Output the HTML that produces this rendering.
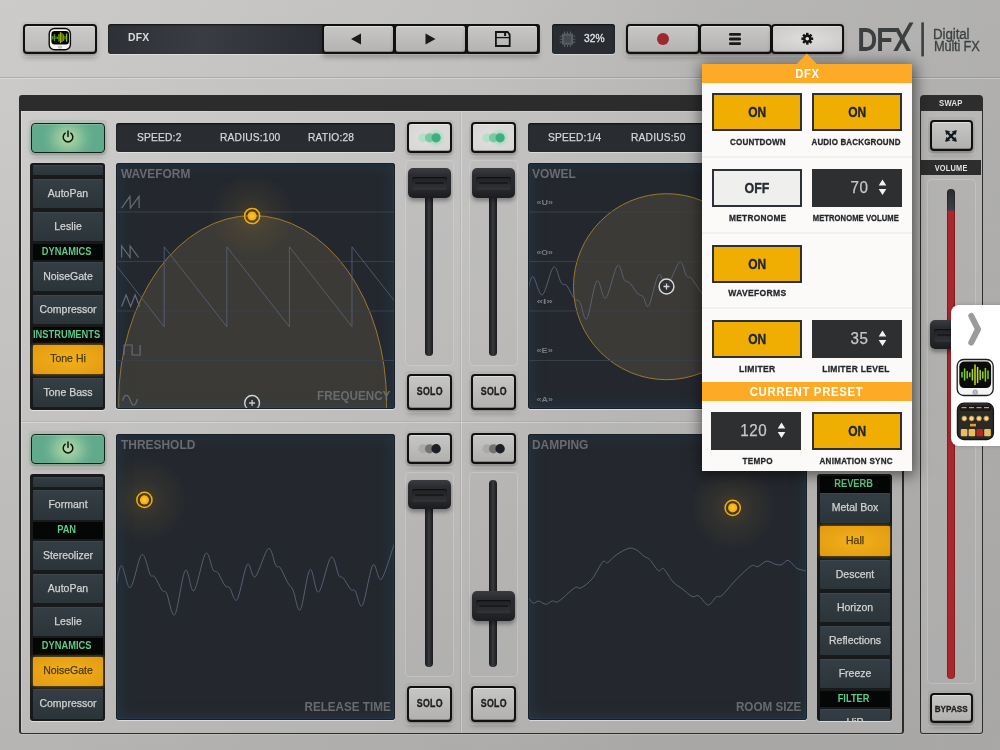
<!DOCTYPE html>
<html><head><meta charset="utf-8"><title>DFX</title>
<style>
*{box-sizing:border-box;margin:0;padding:0}
html,body{width:1000px;height:750px;overflow:hidden}
body{position:relative;background:radial-gradient(circle at 100% 100%,rgba(255,255,255,.1),rgba(255,255,255,0) 45%),linear-gradient(90deg,rgba(0,0,0,0),rgba(0,0,0,.055) 50%,rgba(0,0,0,.1) 70%,rgba(0,0,0,.13)),linear-gradient(180deg,#cccbca,#cac9c8 15%,#c4c3c1 42%,#b6b5b3);font-family:"Liberation Sans",sans-serif;}
.abs{position:absolute}
#topbg{display:none}
#topline{left:0;top:77.2px;width:1000px;height:2px;background:linear-gradient(rgba(0,0,0,.13),rgba(0,0,0,.13) 50%,rgba(255,255,255,.28) 50%)}
.recess{position:absolute;border-radius:5px;background:rgba(0,0,0,.03);box-shadow:inset 0 0 0 1px rgba(255,255,255,.16),inset 0 1px 1px rgba(0,0,0,.10),0 1px 0 rgba(255,255,255,.25)}
.btn{position:absolute;border:2px solid #101010;border-radius:4px;background:linear-gradient(#c6c6c4,#b1b0ae);box-shadow:0 4px 5px rgba(0,0,0,.22),inset 0 1px 0 rgba(255,255,255,.4),inset 0 -1px 0 rgba(0,0,0,.25)}
.btn.top{background:linear-gradient(#c7c7c5,#b4b3b1)}
.btn.top1{background:linear-gradient(#cccbc9,#bbbab8)}
.btn.lit{background:radial-gradient(ellipse at center,#dfdedd,#c9c8c7)}
.btn.tog{background:radial-gradient(ellipse at center,#e2e1df,#d6d5d3)}
.btn.pow{border-color:#15201b;border-width:1.7px;background:radial-gradient(ellipse 36% 85% at 50% 50%,#b8d9a6,#8fc59c 40%,#6cb292 75%,#62aa8c);box-shadow:0 0 5px rgba(110,190,140,.5),0 4px 5px rgba(0,0,0,.2),inset 0 1px 0 rgba(255,255,255,.18)}
.disp{position:absolute;border-radius:3px;background:#292d32;box-shadow:inset 0 1px 2px rgba(0,0,0,.7),0 1px 0 rgba(255,255,255,.4)}
.t{position:absolute;white-space:nowrap;transform-origin:0 50%;line-height:1}
.tc{position:absolute;white-space:nowrap;text-align:center;line-height:1}
.tc span{display:inline-block}
.list{position:absolute;overflow:hidden;background:#17191b;border-radius:3px;box-shadow:0 1px 0 rgba(255,255,255,.5)}
.it{position:absolute;left:3px;right:2px;background:linear-gradient(#343e44,#2b3439);color:#d2d3d3;font-size:10.5px;text-align:center;border-radius:1px;box-shadow:inset 0 1px 0 rgba(255,255,255,.05)}
.it.on{background:radial-gradient(ellipse at center,#f2b01c,#e29a10);color:#4a3a10;box-shadow:0 0 4px rgba(240,170,20,.6)}
.hd{position:absolute;left:3px;right:2px;background:#050606;color:#5fc98a;font-size:10.5px;font-weight:bold;text-align:center}
.it span.c,.hd span.c{position:absolute;left:50%;top:0;white-space:nowrap}
.pad{position:absolute;overflow:hidden;border-radius:3px;background:#24282e;box-shadow:0 1px 0 rgba(255,255,255,.5)}
.pad .glow{position:absolute;left:0;top:0;right:0;bottom:0;border-radius:3px;box-shadow:inset 0 0 0 1px #1a1f25,inset 0 0 2.5px 1px rgba(40,100,150,.4),inset 0 0 16px 1px rgba(48,92,130,.3),inset 0 2px 3px rgba(0,0,0,.35)}
.pl{position:absolute;color:#696b6e;font-size:12px;font-weight:bold;line-height:1;white-space:nowrap}
.frec{position:absolute;border-radius:5px;background:rgba(0,0,0,.015);box-shadow:inset 0 0 0 1px rgba(255,255,255,.2)}
.ftr{position:absolute;width:7.6px;border-radius:3.8px;background:linear-gradient(90deg,#1b1c1f,#2a2b2f 30%,#3a3c41 50%,#2a2b2f 70%,#1b1c1f);}
.fh{position:absolute;width:43px;height:29.5px;border-radius:5px;background:linear-gradient(#3a3c41,#2a2c30 25%,#26282b 70%,#1b1c1f);box-shadow:0 3px 4px rgba(0,0,0,.35)}
.fh i{position:absolute;left:4px;right:4px;top:9px;height:12px;border-radius:2px;background:linear-gradient(#1f2023,#303236);box-shadow:inset 0 1px 1px rgba(0,0,0,.6),0 1px 0 rgba(255,255,255,.06)}
.fh b{position:absolute;left:7px;right:7px;top:14px;height:2px;background:#191a1c;border-radius:1px}
.pop{position:absolute;background:#fbfaf8}
.pbtn{position:absolute;width:90px;height:38px;border:2px solid #2c3037;background:#f0ad02;color:#202733;font-weight:bold;font-size:15px;text-align:center;line-height:34.5px}
.pbtn.off{background:#efefee;color:#262a30}
.pnum{position:absolute;width:90px;height:38px;background:#2e2f31;color:#c8c8c6;font-size:16.5px;line-height:37px}
.plab{position:absolute;width:110px;text-align:center;font-size:9.5px;font-weight:bold;color:#24272c;line-height:1;white-space:nowrap;-webkit-text-stroke:.3px #24272c}
.plab span,.pbtn span,.pnum span{display:inline-block}
.psep{position:absolute;left:0;width:210px;height:2px;background:#f1f0ee}
</style></head><body><div id="root" style="position:absolute;left:0;top:0;width:1000px;height:750px;overflow:hidden;will-change:transform">
<div id="topbg" class="abs"></div><div id="topline" class="abs"></div>
<div class="recess" style="left:21px;top:22px;width:78px;height:34px"></div>
<div class="btn top1" style="left:23px;top:24px;width:74px;height:30px"></div>
<svg class="abs" style="left:47px;top:26px" width="26" height="26" viewBox="47 26 26 26"><rect x="49.2" y="28.5" width="21.2" height="21.2" rx="5.3" fill="#f6f6f6" stroke="#0c0c0c" stroke-width="1.4"/><rect x="51.4" y="30.9" width="17.6" height="13.5" rx="3.2" fill="#050505"/><rect x="58.3" y="46" width="3.4" height="2.2" rx=".8" fill="#cfcfcf" stroke="#aaa" stroke-width=".5"/><g stroke-linecap="round"><path d="M52.8 36.3v2.6" stroke="#6aa912" stroke-width="1.2"/><path d="M54.5 34.6v6" stroke="#4f9a10" stroke-width="1.3"/><path d="M56 36.8v1.6" stroke="#4f9a10" stroke-width="1.2"/><path d="M57.6 37v1.4" stroke="#5a9f10" stroke-width="1.2"/><path d="M59 34.5v6.4" stroke="#5c9c12" stroke-width="1.5"/><path d="M60.5 32.6v10" stroke="#a3a80e" stroke-width="1.3"/><path d="M62 33.6v8" stroke="#7d9f10" stroke-width="1.4"/><path d="M63.5 35v5.400" stroke="#6a9f10" stroke-width="1.3"/><path d="M65 36.5v2.500" stroke="#5fa010" stroke-width="1.2"/><path d="M66.600 34.200v7" stroke="#86b512" stroke-width="1.3"/></g></svg>
<div class="disp" style="left:108px;top:24px;width:432px;height:30px;background:linear-gradient(100deg,#2d3136 0%,#393c42 22%,#2b2e33 48%,#25282d 100%)"></div>
<div class="t" style="left:128px;top:32px;font-size:11.5px;font-weight:bold;color:#dcdcdc;transform:scaleX(.9);letter-spacing:.2px">DFX</div>
<div class="btn top" style="left:322px;top:24px;width:73px;height:30px"></div>
<div class="btn top" style="left:394px;top:24px;width:73px;height:30px"></div>
<div class="btn top" style="left:466px;top:24px;width:73px;height:30px"></div>
<div class="disp" style="left:552px;top:24px;width:63px;height:30px"></div>
<div class="t" style="left:584.3px;top:33.4px;font-size:11px;color:#e2e2e2;transform:scaleX(.93);-webkit-text-stroke:.3px #e2e2e2">32%</div>
<div class="recess" style="left:624px;top:22px;width:222px;height:34px"></div>
<div class="btn top" style="left:626px;top:24px;width:74px;height:30px"></div>
<div class="btn top" style="left:699px;top:24px;width:73px;height:30px"></div>
<div class="btn lit" style="left:771px;top:24px;width:73px;height:30px"></div>
<div class="abs" style="left:657px;top:33px;width:12px;height:12px;border-radius:50%;background:#9b2a2d"></div>
<svg class="abs" style="left:0;top:0" width="1000" height="80" viewBox="0 0 1000 80">
<path d="M351 38.9 L361 33.4 V44.4 Z" fill="#1a1a1a"/>
<path d="M435.5 38.9 L425.5 33.4 V44.4 Z" fill="#1a1a1a"/>
<g fill="#1a1a1a"><rect x="729" y="33" width="12" height="2.8" rx="1.2"/><rect x="729" y="37.6" width="12" height="2.8" rx="1.2"/><rect x="729" y="42.2" width="12" height="2.8" rx="1.2"/></g>
<g id="save" fill="none" stroke="#141414" stroke-width="1.8" stroke-linejoin="miter"><path d="M495.9 32 h11.7 l2.1 2.6 v11.4 h-13.8 z"/><path d="M495.9 37.6 h13.8" stroke-width="1.3"/></g>
<rect x="504.1" y="33" width="2" height="3" fill="#141414"/>
<g id="cpu" fill="#454a52" stroke="#585d65" stroke-width="2"><rect x="563" y="34.7" width="9" height="9"/></g>
<g stroke="#585d65" stroke-width="1.1"><path d="M564.6 31.4v2.5M567.5 31.4v2.5M570.4 31.4v2.5M564.6 44.5v2.5M567.5 44.5v2.5M570.4 44.5v2.5M559.7 36.3h2.5M559.7 39.2h2.5M559.7 42.1h2.5M572.8 36.3h2.5M572.8 39.2h2.5M572.8 42.1h2.5"/></g>
<g id="gear" transform="translate(807.3,38.7)" fill="#141414"><circle r="4.100"/><g><rect x="-1.250" y="-5.900" width="2.500" height="11.800"/><rect x="-1.250" y="-5.900" width="2.500" height="11.800" transform="rotate(45)"/><rect x="-1.250" y="-5.900" width="2.500" height="11.800" transform="rotate(90)"/><rect x="-1.250" y="-5.900" width="2.500" height="11.800" transform="rotate(135)"/></g><circle r="1.800" fill="#e4e3e2"/></g>
<g id="logo" fill="none" stroke="#3b3f40" stroke-width="3.9"><path d="M861.150 30.050 H866.200 A7.800 7.800 0 0 1 874.050 37.850 V41.250 A7.800 7.800 0 0 1 866.200 49.050 H861.150 Z"/><path d="M880.050 51 V30.050 H896 M880.050 40.050 H891.300"/></g><g fill="#3b3f40"><path d="M893.400 51 L897.500 51 L913.500 22.500 L909.400 22.500Z"/><path d="M894.300 28.100 L898.600 28.100 L910.900 51 L906.600 51Z"/></g>
<rect x="921.3" y="22.4" width="2.600" height="34" fill="#3b3f40"/>
</svg>
<div class="t" style="left:933.3px;top:26.7px;font-size:14px;color:#3c4040;transform:scaleX(.955);letter-spacing:-.1px;-webkit-text-stroke:.3px #3c4040">Digital</div>
<div class="t" style="left:934px;top:39px;font-size:14px;color:#3c4040;transform:scaleX(.915);letter-spacing:-.2px;-webkit-text-stroke:.3px #3c4040">Multi FX</div>
<div class="abs" style="left:19px;top:94.5px;width:885px;height:639px;border:2px solid #2c2c2c;border-top-width:16px;border-bottom-width:1.6px;border-radius:3px 3px 3px 3px;background:rgba(255,255,255,.075);box-shadow:0 1px 0 rgba(255,255,255,.18),inset 1px 1px 0 rgba(255,255,255,.2)"></div>
<div class="abs" style="left:461px;top:111.5px;width:1px;height:621px;background:rgba(255,255,255,.3)"></div>
<div class="abs" style="left:460px;top:111.5px;width:1px;height:621px;background:rgba(0,0,0,.06)"></div>
<div class="abs" style="left:21px;top:422px;width:881px;height:1px;background:rgba(255,255,255,.3)"></div>
<div class="abs" style="left:21px;top:421px;width:881px;height:1px;background:rgba(0,0,0,.06)"></div>
<div class="recess" style="left:28px;top:120px;width:80px;height:36px"></div>
<div class="btn pow" style="left:31px;top:123px;width:74px;height:30px"></div>
<svg class="abs" style="left:59.5px;top:129px" width="16" height="16" viewBox="-8 -8 16 16"><path d="M-2.800 -3.800 A4.800 4.800 0 1 0 2.800 -3.800" fill="none" stroke="#0d1814" stroke-width="1.5" stroke-linecap="round"/><path d="M0 -6 V-0.500" stroke="#0d1814" stroke-width="1.5" stroke-linecap="round"/></svg>
<div class="disp" style="left:116.3px;top:123px;width:279.2px;height:29px"></div>
<div class="t" style="left:136.5px;top:132px;font-size:11px;color:#d6d6d6;transform:scaleX(.93);letter-spacing:.2px;-webkit-text-stroke:.25px #d6d6d6">SPEED:2</div>
<div class="t" style="left:220px;top:132px;font-size:11px;color:#d6d6d6;transform:scaleX(.93);letter-spacing:.2px;-webkit-text-stroke:.25px #d6d6d6">RADIUS:100</div>
<div class="t" style="left:308px;top:132px;font-size:11px;color:#d6d6d6;transform:scaleX(.93);letter-spacing:.2px;-webkit-text-stroke:.25px #d6d6d6">RATIO:28</div>
<div class="recess" style="left:404px;top:119.5px;width:51px;height:36px"></div>
<div class="btn tog" style="left:406.8px;top:122.3px;width:45.2px;height:30.7px"></div>
<svg class="abs" style="left:407px;top:122.5px" width="45" height="30" viewBox="407 122.5 45 30"><defs><filter id="gb407122.5" x="-50%" y="-50%" width="200%" height="200%"><feGaussianBlur stdDeviation="2"/></filter></defs><circle cx="435.9" cy="137.3" r="6.5" fill="#5fd6a0" opacity=".55" filter="url(#gb407122.5)"/><circle cx="423.09999999999997" cy="137.3" r="4.6" fill="#b4dec9"/><circle cx="429.5" cy="137.3" r="4.6" fill="#7cc8a3"/><circle cx="436.09999999999997" cy="137.3" r="4.6" fill="#3fae7f"/></svg>
<div class="recess" style="left:468px;top:119.5px;width:51px;height:36px"></div>
<div class="btn tog" style="left:470.8px;top:122.3px;width:45.2px;height:30.7px"></div>
<svg class="abs" style="left:471px;top:122.5px" width="45" height="30" viewBox="471 122.5 45 30"><defs><filter id="gb471122.5" x="-50%" y="-50%" width="200%" height="200%"><feGaussianBlur stdDeviation="2"/></filter></defs><circle cx="499.9" cy="137.3" r="6.5" fill="#5fd6a0" opacity=".55" filter="url(#gb471122.5)"/><circle cx="487.09999999999997" cy="137.3" r="4.6" fill="#b4dec9"/><circle cx="493.5" cy="137.3" r="4.6" fill="#7cc8a3"/><circle cx="500.09999999999997" cy="137.3" r="4.6" fill="#3fae7f"/></svg>
<div class="list" style="left:30px;top:163px;width:75px;height:247px">
<div class="it" style="top:2px;height:9.5px;line-height:8.3px"><span class="c" style="-webkit-text-stroke:.25px currentColor;transform:translateX(-50%) scaleX(1.0)"></span></div>
<div class="it" style="top:15.5px;height:29.5px;line-height:28.3px"><span class="c" style="-webkit-text-stroke:.25px currentColor;transform:translateX(-50%) scaleX(1.0)">AutoPan</span></div>
<div class="it" style="top:48.5px;height:29.5px;line-height:28.3px"><span class="c" style="-webkit-text-stroke:.25px currentColor;transform:translateX(-50%) scaleX(1.0)">Leslie</span></div>
<div class="hd" style="top:81px;height:16px;line-height:14.8px"><span class="c" style="transform:translateX(calc(-50% - 1.4px)) scaleX(0.885)">DYNAMICS</span></div>
<div class="it" style="top:98.5px;height:29.5px;line-height:28.3px"><span class="c" style="-webkit-text-stroke:.25px currentColor;transform:translateX(-50%) scaleX(1.0)">NoiseGate</span></div>
<div class="it" style="top:131.5px;height:29.5px;line-height:28.3px"><span class="c" style="-webkit-text-stroke:.25px currentColor;transform:translateX(-50%) scaleX(1.0)">Compressor</span></div>
<div class="hd" style="top:163.5px;height:16px;line-height:14.8px"><span class="c" style="transform:translateX(calc(-50% - 1.4px)) scaleX(0.885)">INSTRUMENTS</span></div>
<div class="it on" style="top:182px;height:29px;line-height:27.8px"><span class="c" style="-webkit-text-stroke:.25px currentColor;transform:translateX(-50%) scaleX(1.0)">Tone Hi</span></div>
<div class="it" style="top:214.5px;height:29.5px;line-height:28.3px"><span class="c" style="-webkit-text-stroke:.25px currentColor;transform:translateX(-50%) scaleX(1.0)">Tone Bass</span></div>
</div>
<div class="frec" style="left:404.5px;top:160px;width:49px;height:206px"></div>
<div class="ftr" style="left:425.3px;top:167.5px;height:188.5px"></div>
<div class="fh" style="left:408.0px;top:168.3px"><i></i><b></b></div>
<div class="frec" style="left:468.5px;top:160px;width:49px;height:206px"></div>
<div class="ftr" style="left:489.3px;top:167.5px;height:188.5px"></div>
<div class="fh" style="left:472.0px;top:168.3px"><i></i><b></b></div>
<div class="recess" style="left:404px;top:371px;width:51px;height:41px"></div>
<div class="btn" style="left:406.5px;top:373.5px;width:45.5px;height:36px"></div>
<div class="tc" style="left:407px;top:386.7px;width:45px;font-size:10px;font-weight:bold;color:#1c1c1c"><span style="transform:scaleX(.88);letter-spacing:.3px;-webkit-text-stroke:.3px #1c1c1c">SOLO</span></div>
<div class="recess" style="left:468px;top:371px;width:51px;height:41px"></div>
<div class="btn" style="left:470.5px;top:373.5px;width:45.5px;height:36px"></div>
<div class="tc" style="left:471px;top:386.7px;width:45px;font-size:10px;font-weight:bold;color:#1c1c1c"><span style="transform:scaleX(.88);letter-spacing:.3px;-webkit-text-stroke:.3px #1c1c1c">SOLO</span></div>
<div class="recess" style="left:28px;top:431px;width:80px;height:36px"></div>
<div class="btn pow" style="left:31px;top:434px;width:74px;height:30px"></div>
<svg class="abs" style="left:59.5px;top:440px" width="16" height="16" viewBox="-8 -8 16 16"><path d="M-2.800 -3.800 A4.800 4.800 0 1 0 2.800 -3.800" fill="none" stroke="#0d1814" stroke-width="1.5" stroke-linecap="round"/><path d="M0 -6 V-0.500" stroke="#0d1814" stroke-width="1.5" stroke-linecap="round"/></svg>
<div class="recess" style="left:404px;top:430.5px;width:51px;height:36px"></div>
<div class="btn" style="left:406.8px;top:433.3px;width:45.2px;height:30.7px"></div>
<svg class="abs" style="left:407px;top:433.5px" width="45" height="30" viewBox="407 433.5 45 30"><circle cx="423.09999999999997" cy="448.3" r="4.6" fill="#a9a9a7"/><circle cx="429.5" cy="448.3" r="4.6" fill="#737373"/><circle cx="436.09999999999997" cy="448.3" r="4.7" fill="#1c1f25"/></svg>
<div class="recess" style="left:468px;top:430.5px;width:51px;height:36px"></div>
<div class="btn" style="left:470.8px;top:433.3px;width:45.2px;height:30.7px"></div>
<svg class="abs" style="left:471px;top:433.5px" width="45" height="30" viewBox="471 433.5 45 30"><circle cx="487.09999999999997" cy="448.3" r="4.6" fill="#a9a9a7"/><circle cx="493.5" cy="448.3" r="4.6" fill="#737373"/><circle cx="500.09999999999997" cy="448.3" r="4.7" fill="#1c1f25"/></svg>
<div class="list" style="left:30px;top:474px;width:75px;height:247px">
<div class="it" style="top:3px;height:9.5px;line-height:8.3px"><span class="c" style="-webkit-text-stroke:.25px currentColor;transform:translateX(-50%) scaleX(1.0)"></span></div>
<div class="it" style="top:16px;height:29.5px;line-height:28.3px"><span class="c" style="-webkit-text-stroke:.25px currentColor;transform:translateX(-50%) scaleX(1.0)">Formant</span></div>
<div class="hd" style="top:48px;height:16.5px;line-height:15.3px"><span class="c" style="transform:translateX(calc(-50% - 1.4px)) scaleX(0.885)">PAN</span></div>
<div class="it" style="top:66.5px;height:29.5px;line-height:28.3px"><span class="c" style="-webkit-text-stroke:.25px currentColor;transform:translateX(-50%) scaleX(1.0)">Stereolizer</span></div>
<div class="it" style="top:99.5px;height:29.5px;line-height:28.3px"><span class="c" style="-webkit-text-stroke:.25px currentColor;transform:translateX(-50%) scaleX(1.0)">AutoPan</span></div>
<div class="it" style="top:132.5px;height:29.5px;line-height:28.3px"><span class="c" style="-webkit-text-stroke:.25px currentColor;transform:translateX(-50%) scaleX(1.0)">Leslie</span></div>
<div class="hd" style="top:164px;height:16.5px;line-height:15.3px"><span class="c" style="transform:translateX(calc(-50% - 1.4px)) scaleX(0.885)">DYNAMICS</span></div>
<div class="it on" style="top:182.5px;height:29px;line-height:27.8px"><span class="c" style="-webkit-text-stroke:.25px currentColor;transform:translateX(-50%) scaleX(1.0)">NoiseGate</span></div>
<div class="it" style="top:215px;height:29.5px;line-height:28.3px"><span class="c" style="-webkit-text-stroke:.25px currentColor;transform:translateX(-50%) scaleX(1.0)">Compressor</span></div>
</div>
<div class="frec" style="left:404.5px;top:472px;width:49px;height:205px"></div>
<div class="ftr" style="left:425.3px;top:479.5px;height:187.5px"></div>
<div class="fh" style="left:408.0px;top:479.8px"><i></i><b></b></div>
<div class="frec" style="left:468.5px;top:472px;width:49px;height:205px"></div>
<div class="ftr" style="left:489.3px;top:479.5px;height:187.5px"></div>
<div class="fh" style="left:472.0px;top:591px"><i></i><b></b></div>
<div class="recess" style="left:404px;top:683px;width:51px;height:41px"></div>
<div class="btn" style="left:406.5px;top:685.5px;width:45.5px;height:36px"></div>
<div class="tc" style="left:407px;top:698.7px;width:45px;font-size:10px;font-weight:bold;color:#1c1c1c"><span style="transform:scaleX(.88);letter-spacing:.3px;-webkit-text-stroke:.3px #1c1c1c">SOLO</span></div>
<div class="recess" style="left:468px;top:683px;width:51px;height:41px"></div>
<div class="btn" style="left:470.5px;top:685.5px;width:45.5px;height:36px"></div>
<div class="tc" style="left:471px;top:698.7px;width:45px;font-size:10px;font-weight:bold;color:#1c1c1c"><span style="transform:scaleX(.88);letter-spacing:.3px;-webkit-text-stroke:.3px #1c1c1c">SOLO</span></div>
<div class="list" style="left:817px;top:474px;width:75px;height:247px">
<div class="hd" style="top:2px;height:16.5px;line-height:15.3px"><span class="c" style="transform:translateX(calc(-50% - 1.4px)) scaleX(0.885)">REVERB</span></div>
<div class="it" style="top:19px;height:29.5px;line-height:28.3px"><span class="c" style="-webkit-text-stroke:.25px currentColor;transform:translateX(-50%) scaleX(1.0)">Metal Box</span></div>
<div class="it on" style="top:52px;height:30px;line-height:28.8px"><span class="c" style="-webkit-text-stroke:.25px currentColor;transform:translateX(-50%) scaleX(1.0)">Hall</span></div>
<div class="it" style="top:85.5px;height:29.5px;line-height:28.3px"><span class="c" style="-webkit-text-stroke:.25px currentColor;transform:translateX(-50%) scaleX(1.0)">Descent</span></div>
<div class="it" style="top:118.5px;height:29.5px;line-height:28.3px"><span class="c" style="-webkit-text-stroke:.25px currentColor;transform:translateX(-50%) scaleX(1.0)">Horizon</span></div>
<div class="it" style="top:151.5px;height:29.5px;line-height:28.3px"><span class="c" style="-webkit-text-stroke:.25px currentColor;transform:translateX(-50%) scaleX(1.0)">Reflections</span></div>
<div class="it" style="top:184.5px;height:29.5px;line-height:28.3px"><span class="c" style="-webkit-text-stroke:.25px currentColor;transform:translateX(-50%) scaleX(1.0)">Freeze</span></div>
<div class="hd" style="top:216.5px;height:16.5px;line-height:15.3px"><span class="c" style="transform:translateX(calc(-50% - 1.4px)) scaleX(0.885)">FILTER</span></div>
<div class="it" style="top:235px;height:28px;line-height:26.8px"><span class="c" style="-webkit-text-stroke:.25px currentColor;transform:translateX(-50%) scaleX(1.0)">HiP</span></div>
</div>
<div class="disp" style="left:527.6px;top:123px;width:279.2px;height:29px"></div>
<div class="t" style="left:548px;top:132px;font-size:11px;color:#d6d6d6;transform:scaleX(.93);letter-spacing:.2px;-webkit-text-stroke:.25px #d6d6d6">SPEED:1/4</div>
<div class="t" style="left:631px;top:132px;font-size:11px;color:#d6d6d6;transform:scaleX(.93);letter-spacing:.2px;-webkit-text-stroke:.25px #d6d6d6">RADIUS:50</div>
<div class="pad" style="left:116.4px;top:162.5px;width:278.8px;height:246.7px">
<svg class="abs" style="left:0;top:0" width="278.8" height="246.7" viewBox="116.4 162.5 278.8 246.7"><defs><radialGradient id="hg"><stop offset="0" stop-color="#e0a020" stop-opacity=".17"/><stop offset=".5" stop-color="#d0a030" stop-opacity=".065"/><stop offset="1" stop-color="#f0a010" stop-opacity="0"/></radialGradient><radialGradient id="hd"><stop offset="0" stop-color="#ffc83a"/><stop offset="1" stop-color="#f5a800"/></radialGradient></defs><ellipse cx="253" cy="402" rx="134" ry="187" fill="rgba(78,72,62,.55)" stroke="#a8812f" stroke-width=".9"/><path d="M116 211.5H396" stroke="#3a4048" stroke-width="1"/><path d="M116 261H396" stroke="#3a4048" stroke-width="1"/><path d="M116 310.5H396" stroke="#3a4048" stroke-width="1"/><path d="M116 360H396" stroke="#3a4048" stroke-width="1"/><path d="M116 264.2 L164.6 326.2 L164.6 246.3 L227.2 326.2 L227.2 246.3 L289.8 326.2 L289.8 246.3 L352.40000000000003 326.2 L352.4 246.3 L396 301.9" fill="none" stroke="#5b6a82" stroke-width="1" opacity=".75"/><g fill="none" stroke="#666d78" stroke-width="1.2"><path d="M122 207.600 L130.300 195.800 L130.800 207.600 L139.400 195.800 L139.600 207.600"/><path d="M122 257 V245.5 L130.5 257 V245.5 L139 257"/><path d="M122 306 L126.5 294.5 L131 306 L135.5 294.5 L140 306"/><path d="M124.500 354.500 V344.500 H132.500 V354.500 H140.500 V344.500"/><path d="M123 400.500 C124.500 394 128 392.500 130.500 399.500 S135.500 406.500 137.800 398.500"/></g><circle cx="252.5" cy="215.5" r="42" fill="url(#hg)"/><circle cx="252.5" cy="215.5" r="7.6" fill="none" stroke="#f6ab04" stroke-width="1.5"/><circle cx="252.5" cy="215.5" r="4.6" fill="url(#hd)"/><circle cx="252.5" cy="402.5" r="7.4" fill="rgba(40,42,46,.6)" stroke="#d8d8d8" stroke-width="1.5"/><path d="M249.5 402.5h6M252.5 399.5v6" stroke="#d8d8d8" stroke-width="1.3"/></svg>
<div class="glow"></div>
<div class="pl" style="left:4.4px;top:5.5px;transform-origin:0 50%;transform:scaleX(.995)">WAVEFORM</div>
<div class="pl" style="right:5px;bottom:7px;transform-origin:100% 50%;transform:scaleX(.972)">FREQUENCY</div>
</div>
<div class="pad" style="left:527.8px;top:162.5px;width:278.8px;height:246.7px">
<svg class="abs" style="left:0;top:0" width="278.8" height="246.7" viewBox="527.8 162.5 278.8 246.7"><defs><radialGradient id="hg"><stop offset="0" stop-color="#e0a020" stop-opacity=".17"/><stop offset=".5" stop-color="#d0a030" stop-opacity=".065"/><stop offset="1" stop-color="#f0a010" stop-opacity="0"/></radialGradient><radialGradient id="hd"><stop offset="0" stop-color="#ffc83a"/><stop offset="1" stop-color="#f5a800"/></radialGradient></defs><circle cx="666.3" cy="286.2" r="93" fill="rgba(78,72,62,.55)" stroke="#a8812f" stroke-width=".9"/><path d="M528 211.5H808" stroke="#3a4048" stroke-width="1"/><path d="M528 261H808" stroke="#3a4048" stroke-width="1"/><path d="M528 310.5H808" stroke="#3a4048" stroke-width="1"/><path d="M528 360H808" stroke="#3a4048" stroke-width="1"/><path d="M526.8 294.0 C527.8 291.0 530.0 275.9 532.6 276.0 C535.2 276.1 538.6 296.0 542.1 294.4 C545.6 292.8 550.2 268.6 553.4 266.6 C556.5 264.6 558.8 279.2 561.0 282.3 C563.2 285.4 564.7 282.8 566.8 285.4 C568.9 287.9 571.4 294.8 573.6 297.6 C575.8 300.4 577.7 298.7 579.9 302.1 C582.1 305.6 583.8 321.9 586.6 318.3 C589.4 314.7 593.5 283.9 596.6 280.5 C599.8 277.1 602.1 300.2 605.5 297.6 C608.9 295.1 614.1 268.3 617.2 265.2 C620.3 262.1 622.0 276.3 624.0 279.2 C626.0 282.1 627.1 280.0 629.4 282.3 C631.6 284.6 635.2 290.8 637.5 293.1 C639.8 295.4 641.0 294.2 642.9 296.2 C644.8 298.2 646.0 308.9 648.6 305.2 C651.2 301.5 655.5 277.4 658.5 274.2 C661.5 271.0 663.0 288.1 666.5 286.0 C670.0 283.9 676.1 263.4 679.4 261.6 C682.7 259.8 684.1 272.3 686.1 275.1 C688.1 277.9 688.8 275.1 691.5 278.2 C694.2 281.3 699.9 290.9 702.3 294.0 C704.7 297.1 705.4 296.5 706.0 297.0" fill="none" stroke="#5b6a82" stroke-width="1" opacity=".85"/><circle cx="666.3" cy="286" r="7.4" fill="rgba(40,42,46,.6)" stroke="#d8d8d8" stroke-width="1.5"/><path d="M663.3 286h6M666.3 283v6" stroke="#d8d8d8" stroke-width="1.3"/><text x="536.2" y="204.7" font-size="7.5" font-weight="bold" fill="#787b81" font-family="Liberation Sans" textLength="16.5" lengthAdjust="spacingAndGlyphs">«U»</text><text x="536.2" y="254.2" font-size="7.5" font-weight="bold" fill="#787b81" font-family="Liberation Sans" textLength="16.5" lengthAdjust="spacingAndGlyphs">«O»</text><text x="536.2" y="303.2" font-size="7.5" font-weight="bold" fill="#787b81" font-family="Liberation Sans" textLength="16.5" lengthAdjust="spacingAndGlyphs">«I»</text><text x="536.2" y="352.7" font-size="7.5" font-weight="bold" fill="#787b81" font-family="Liberation Sans" textLength="16.5" lengthAdjust="spacingAndGlyphs">«E»</text><text x="536.2" y="401.7" font-size="7.5" font-weight="bold" fill="#787b81" font-family="Liberation Sans" textLength="16.5" lengthAdjust="spacingAndGlyphs">«A»</text></svg>
<div class="glow"></div>
<div class="pl" style="left:4.4px;top:5.5px;transform-origin:0 50%;transform:scaleX(.995)">VOWEL</div>
<div class="pl" style="right:5px;bottom:7px;transform-origin:100% 50%;transform:scaleX(.972)"></div>
</div>
<div class="pad" style="left:116.4px;top:433.7px;width:278.8px;height:286.6px">
<svg class="abs" style="left:0;top:0" width="278.8" height="286.6" viewBox="116.4 433.7 278.8 286.6"><defs><radialGradient id="hg"><stop offset="0" stop-color="#e0a020" stop-opacity=".17"/><stop offset=".5" stop-color="#d0a030" stop-opacity=".065"/><stop offset="1" stop-color="#f0a010" stop-opacity="0"/></radialGradient><radialGradient id="hd"><stop offset="0" stop-color="#ffc83a"/><stop offset="1" stop-color="#f5a800"/></radialGradient></defs><path d="M116.0 590.0 C117.0 585.9 119.2 565.7 121.7 565.2 C124.2 564.8 127.3 589.1 130.7 587.3 C134.1 585.5 138.9 556.5 142.2 554.3 C145.5 552.1 148.4 570.5 150.5 574.2 C152.6 577.9 153.0 573.9 155.0 576.5 C157.0 579.1 160.5 587.2 162.5 590.0 C164.5 592.8 164.9 589.0 167.0 593.0 C169.1 597.0 172.1 618.1 175.2 614.3 C178.3 610.5 182.5 574.2 185.7 570.2 C188.9 566.2 190.9 593.2 194.3 590.4 C197.7 587.6 202.8 556.7 206.0 553.2 C209.2 549.8 211.5 566.6 213.5 569.7 C215.5 572.8 216.0 569.4 218.0 572.0 C220.0 574.6 223.5 583.0 225.5 585.5 C227.5 588.0 228.0 585.0 230.0 587.3 C232.0 589.6 234.6 603.1 237.5 599.3 C240.4 595.4 244.7 568.0 247.7 564.2 C250.7 560.4 252.1 579.1 255.6 576.5 C259.1 573.9 265.3 550.2 268.7 548.3 C272.1 546.4 274.2 562.0 276.2 565.2 C278.2 568.4 278.7 564.6 280.7 567.5 C282.7 570.4 286.1 578.8 288.2 582.5 C290.3 586.2 291.4 585.5 293.5 590.0 C295.6 594.5 297.9 613.0 300.7 609.5 C303.5 606.0 307.3 572.2 310.4 569.3 C313.4 566.3 315.5 593.8 319.0 591.8 C322.5 589.8 328.0 559.8 331.4 557.0 C334.8 554.2 337.1 571.5 339.2 575.0 C341.2 578.5 341.7 575.3 343.7 577.7 C345.7 580.1 349.2 587.0 351.2 589.2 C353.2 591.4 353.8 588.1 355.7 590.7 C357.6 593.3 359.9 609.3 362.8 605.0 C365.7 600.7 370.2 569.1 373.3 564.8 C376.4 560.5 378.2 582.2 381.7 579.0 C385.1 575.8 391.6 552.0 394.0 545.7 C396.4 539.4 395.7 541.8 396.0 541.0" fill="none" stroke="#5b6a82" stroke-width="1" opacity=".85"/><circle cx="144.8" cy="499.6" r="42" fill="url(#hg)"/><circle cx="144.8" cy="499.6" r="7.6" fill="none" stroke="#f6ab04" stroke-width="1.5"/><circle cx="144.8" cy="499.6" r="4.6" fill="url(#hd)"/></svg>
<div class="glow"></div>
<div class="pl" style="left:4.4px;top:5.5px;transform-origin:0 50%;transform:scaleX(.995)">THRESHOLD</div>
<div class="pl" style="right:5px;bottom:7px;transform-origin:100% 50%;transform:scaleX(.972)">RELEASE TIME</div>
</div>
<div class="pad" style="left:527.8px;top:433.7px;width:278.8px;height:286.6px">
<svg class="abs" style="left:0;top:0" width="278.8" height="286.6" viewBox="527.8 433.7 278.8 286.6"><defs><radialGradient id="hg"><stop offset="0" stop-color="#e0a020" stop-opacity=".17"/><stop offset=".5" stop-color="#d0a030" stop-opacity=".065"/><stop offset="1" stop-color="#f0a010" stop-opacity="0"/></radialGradient><radialGradient id="hd"><stop offset="0" stop-color="#ffc83a"/><stop offset="1" stop-color="#f5a800"/></radialGradient></defs><path d="M527.2 595.6 C528.1 596.8 530.9 601.9 532.8 602.7 C534.7 603.6 536.3 600.5 538.4 600.7 C540.5 600.9 543.3 604.0 545.6 604.0 C547.9 604.0 549.9 601.2 552.0 600.7 C554.1 600.2 554.7 603.2 558.4 601.0 C562.1 598.8 570.7 589.8 574.4 587.6 C578.1 585.4 577.9 589.1 580.8 587.6 C583.7 586.1 588.4 582.7 592.0 578.4 C595.6 574.1 599.9 564.3 602.4 561.6 C604.9 558.9 604.9 563.5 607.2 562.4 C609.5 561.2 612.4 557.1 616.0 554.7 C619.6 552.3 625.2 548.8 628.7 548.0 C632.2 547.2 634.2 548.6 636.7 549.9 C639.2 551.2 641.8 554.5 643.9 556.0 C646.0 557.5 647.1 556.8 649.5 559.2 C651.9 561.6 656.0 568.9 658.3 570.4 C660.6 571.9 661.1 566.5 663.5 568.4 C665.9 570.3 669.6 578.2 672.8 581.6 C675.9 585.0 679.2 586.3 682.4 588.8 C685.6 591.2 689.3 595.2 692.0 596.3 C694.7 597.4 695.7 594.2 698.4 595.6 C701.1 597.0 705.1 604.5 708.0 604.7 C710.9 604.9 713.7 598.3 716.0 596.7 C718.3 595.1 718.1 598.2 721.6 595.2 C725.1 592.2 731.9 583.3 736.8 578.4 C741.7 573.5 747.7 567.6 751.2 565.6 C754.7 563.6 755.1 567.2 757.6 566.4 C760.1 565.6 763.5 561.2 766.4 560.8 C769.3 560.4 772.6 563.4 775.1 564.0 C777.6 564.6 779.4 564.9 781.5 564.3 C783.6 563.6 785.4 559.5 787.9 560.1 C790.4 560.7 793.9 566.3 796.7 568.0 C799.5 569.7 802.8 569.8 804.7 570.4 C806.6 571.0 807.5 571.3 808.0 571.5" fill="none" stroke="#5b6a82" stroke-width="1" opacity=".85"/><circle cx="732.5" cy="507.5" r="42" fill="url(#hg)"/><circle cx="732.5" cy="507.5" r="7.6" fill="none" stroke="#f6ab04" stroke-width="1.5"/><circle cx="732.5" cy="507.5" r="4.6" fill="url(#hd)"/></svg>
<div class="glow"></div>
<div class="pl" style="left:4.4px;top:5.5px;transform-origin:0 50%;transform:scaleX(.995)">DAMPING</div>
<div class="pl" style="right:5px;bottom:7px;transform-origin:100% 50%;transform:scaleX(.972)">ROOM SIZE</div>
</div>
<div class="abs" style="left:919.5px;top:94.5px;width:63.3px;height:639px;border:1.8px solid #2d2d2d;border-top-width:16.5px;border-bottom-width:1.6px;border-radius:4px 4px 3px 3px;background:rgba(255,255,255,.09);box-shadow:0 1px 0 rgba(255,255,255,.15)"></div>
<div class="tc" style="left:921px;top:99px;width:60px;font-size:9px;font-weight:bold;color:#e2e2e2"><span style="transform:scaleX(.85);letter-spacing:.3px">SWAP</span></div>
<div class="recess" style="left:926.5px;top:116.5px;width:49px;height:37px"></div>
<div class="btn" style="left:929.5px;top:119.5px;width:43px;height:31px"></div>
<svg class="abs" style="left:943.4px;top:127.5px" width="16" height="16" viewBox="-8 -8 16 16"><g fill="#0d141d" stroke="#0d141d"><path d="M-3 -3 L3 3 M-3 3 L3 -3" stroke-width="2.3"/><g id="ar" stroke-width=".5" stroke-linejoin="round"><path d="M-5.500 -5.500 L-1.200 -4.400 L-4.400 -1.200Z"/></g><use href="#ar" transform="rotate(90)"/><use href="#ar" transform="rotate(180)"/><use href="#ar" transform="rotate(270)"/></g></svg>
<div class="abs" style="left:921px;top:160px;width:60px;height:14.5px;background:#2d2d2d"></div>
<div class="tc" style="left:921px;top:163.5px;width:60px;font-size:9px;font-weight:bold;color:#e2e2e2"><span style="transform:scaleX(.82);letter-spacing:.3px">VOLUME</span></div>
<div class="frec" style="left:927px;top:179px;width:48.5px;height:505px"></div>
<div class="abs" style="left:947px;top:188.5px;width:8px;height:490px;border-radius:4px;background:linear-gradient(#2a2c30 0,#3c3f45 21px,#a9282d 22px,#a9282d);box-shadow:inset 1px 0 0 rgba(0,0,0,.25),inset -1px 0 0 rgba(0,0,0,.25)"></div>
<div class="fh" style="left:930px;top:319.5px;height:29.5px"><i></i><b></b></div>
<div class="recess" style="left:927px;top:690px;width:49px;height:36px"></div>
<div class="btn" style="left:930px;top:693px;width:43px;height:30px"></div>
<div class="tc" style="left:930px;top:703.5px;width:43px;font-size:9.5px;font-weight:bold;color:#1f1f1f"><span style="transform:scaleX(.86);-webkit-text-stroke:.3px #1f1f1f">BYPASS</span></div>
<div class="abs" style="left:702px;top:64px;width:210px;height:406.5px;box-shadow:1px 2px 14px 2px rgba(0,0,0,.55)"></div>
<div class="pop" style="left:702px;top:64px;width:210px;height:406.5px">
<div class="abs" style="left:0;top:0;width:210px;height:19px;background:#fdab27"></div>
<div class="tc" style="left:0;top:4px;width:210px;font-size:12.5px;font-weight:bold;color:#fff"><span style="transform:scaleX(.9);letter-spacing:.6px">DFX</span></div>
<div class="pbtn" style="left:10px;top:29px"><span style="transform:scaleX(0.8);-webkit-text-stroke:.35px currentColor">ON</span></div>
<div class="pbtn" style="left:110px;top:29px"><span style="transform:scaleX(0.8);-webkit-text-stroke:.35px currentColor">ON</span></div>
<div class="plab" style="left:0.5px;top:73.1px"><span style="transform:scaleX(0.85);letter-spacing:0.2px">COUNTDOWN</span></div>
<div class="plab" style="left:99.19999999999999px;top:73.1px"><span style="transform:scaleX(0.84);letter-spacing:0.2px">AUDIO BACKGROUND</span></div>
<div class="psep" style="top:92px"></div>
<div class="pbtn off" style="left:10px;top:104.5px"><span style="transform:scaleX(0.83);-webkit-text-stroke:.35px currentColor">OFF</span></div>
<div class="pnum" style="left:110px;top:104.5px"><span class="abs" style="right:33.5px;top:.3px;transform:scaleX(.92);-webkit-text-stroke:.25px currentColor;transform-origin:100% 50%;letter-spacing:.5px">70</span><svg class="abs" style="right:15px;top:10.5px" width="9" height="17" viewBox="0 0 9 17"><path d="M4.5 0.5 L8.3 6.5 H0.7Z M4.5 16 L8.3 10 H0.7Z" fill="#f2f2f2"/></svg></div>
<div class="plab" style="left:0.5px;top:148.6px"><span style="transform:scaleX(0.875);letter-spacing:0.3px">METRONOME</span></div>
<div class="plab" style="left:99.19999999999999px;top:148.6px"><span style="transform:scaleX(0.8);letter-spacing:0.1px">METRONOME VOLUME</span></div>
<div class="psep" style="top:168px"></div>
<div class="pbtn" style="left:10px;top:180.5px"><span style="transform:scaleX(0.8);-webkit-text-stroke:.35px currentColor">ON</span></div>
<div class="plab" style="left:0.5px;top:223.9px"><span style="transform:scaleX(0.899);letter-spacing:0.35px">WAVEFORMS</span></div>
<div class="psep" style="top:243px"></div>
<div class="pbtn" style="left:10px;top:255.5px"><span style="transform:scaleX(0.8);-webkit-text-stroke:.35px currentColor">ON</span></div>
<div class="pnum" style="left:110px;top:255.5px"><span class="abs" style="right:33.5px;top:.3px;transform:scaleX(.92);-webkit-text-stroke:.25px currentColor;transform-origin:100% 50%;letter-spacing:.5px">35</span><svg class="abs" style="right:15px;top:10.5px" width="9" height="17" viewBox="0 0 9 17"><path d="M4.5 0.5 L8.3 6.5 H0.7Z M4.5 16 L8.3 10 H0.7Z" fill="#f2f2f2"/></svg></div>
<div class="plab" style="left:0.5px;top:299.6px"><span style="transform:scaleX(0.899);letter-spacing:0.35px">LIMITER</span></div>
<div class="plab" style="left:99.19999999999999px;top:299.6px"><span style="transform:scaleX(0.89);letter-spacing:0.35px">LIMITER LEVEL</span></div>
<div class="abs" style="left:0;top:318px;width:210px;height:19px;background:#fdab27"></div>
<div class="tc" style="left:0;top:322px;width:210px;font-size:12.5px;font-weight:bold;color:#fff"><span style="transform:scaleX(.91);letter-spacing:.75px">CURRENT PRESET</span></div>
<div class="pnum" style="left:9px;top:347.5px"><span class="abs" style="right:34px;top:.3px;transform:scaleX(.92);-webkit-text-stroke:.25px currentColor;transform-origin:100% 50%;letter-spacing:.5px">120</span><svg class="abs" style="right:15px;top:10.5px" width="9" height="17" viewBox="0 0 9 17"><path d="M4.5 0.5 L8.3 6.5 H0.7Z M4.5 16 L8.3 10 H0.7Z" fill="#f2f2f2"/></svg></div>
<div class="pbtn" style="left:110px;top:347.5px"><span style="transform:scaleX(0.8);-webkit-text-stroke:.35px currentColor">ON</span></div>
<div class="plab" style="left:0.5px;top:392.1px"><span style="transform:scaleX(0.86);letter-spacing:0.3px">TEMPO</span></div>
<div class="plab" style="left:99.19999999999999px;top:392.1px"><span style="transform:scaleX(0.85);letter-spacing:0.3px">ANIMATION SYNC</span></div>
</div>
<svg class="abs" style="left:794px;top:52px" width="26" height="13" viewBox="794 52 26 13"><path d="M796.4 64.5 L806.8 53.6 L817.2 64.5Z" fill="#fdab27"/></svg>
<div class="abs" style="left:951px;top:305px;width:60px;height:140.5px;background:#fff;border-radius:8px;box-shadow:0 0 5px rgba(0,0,0,.18)"></div>
<svg class="abs" style="left:951px;top:305px" width="49" height="141" viewBox="951 305 49 141"><path d="M971.3 316 L978 329.2 L971.3 342.5" fill="none" stroke="#9b9b9b" stroke-width="6" stroke-linecap="round" stroke-linejoin="miter"/><rect x="957.2" y="359.5" width="36" height="36" rx="6.5" fill="#f4f4f4" stroke="#1b1b1b" stroke-width="1.3"/><rect x="959.3" y="361.6" width="31.8" height="26.5" rx="5" fill="#0b0b0b"/><circle cx="975.2" cy="392.2" r="2.3" fill="#bdbdbd" stroke="#8f8f8f" stroke-width=".8"/><g stroke-linecap="round" stroke-width="1.5"><path d="M962 372.5v4.5" stroke="#7ccf1e"/><path d="M964.6 369v11" stroke="#7ccf1e"/><path d="M967.2 371.5v6.5" stroke="#86d21e"/><path d="M969.8 373v3.5" stroke="#95d41e"/><path d="M972.4 369.5v10.5" stroke="#a7d81e"/><path d="M975 365v19.500" stroke="#c8dc1e"/><path d="M977.6 367.5v15" stroke="#c8dc1e"/><path d="M980.2 370.5v9" stroke="#a7d81e"/><path d="M982.8 372v6" stroke="#95d41e"/><path d="M985.4 368.500v12.500" stroke="#86d21e"/><path d="M988 371v7.500" stroke="#7ccf1e"/></g><rect x="957.4" y="403.2" width="36" height="36.300" rx="6.5" fill="#2c2a27" stroke="#151515" stroke-width="1.3"/><rect x="959.5" y="405.5" width="31.8" height="5.5" rx="2" fill="#1a1917"/><g fill="#c9a24a"><rect x="961.5" y="407" width="5" height="1.2"/><rect x="969" y="407" width="5" height="1.2"/><rect x="976.500" y="407" width="5" height="1.2"/><rect x="984" y="407" width="5" height="1.2"/></g><g fill="#e8d9b0" stroke="#c08a2a" stroke-width=".9"><circle cx="964.3" cy="418.5" r="2.4"/><circle cx="971.600" cy="418.5" r="2.4"/><circle cx="979" cy="418.5" r="2.4"/><circle cx="986.3" cy="418.5" r="2.4"/></g><rect x="970" y="423.8" width="6" height="2.6" fill="#e0a030"/><g><rect x="960.8" y="429" width="6.600" height="7.200" rx="1" fill="#e6c060"/><rect x="968.600" y="429" width="6.600" height="7.200" rx="1" fill="#e6c060"/><rect x="976.400" y="429" width="6.600" height="7.200" rx="1" fill="#b42a1c"/><rect x="984.200" y="429" width="6.600" height="7.200" rx="1" fill="#e6c060"/></g></svg>
</div></body></html>
